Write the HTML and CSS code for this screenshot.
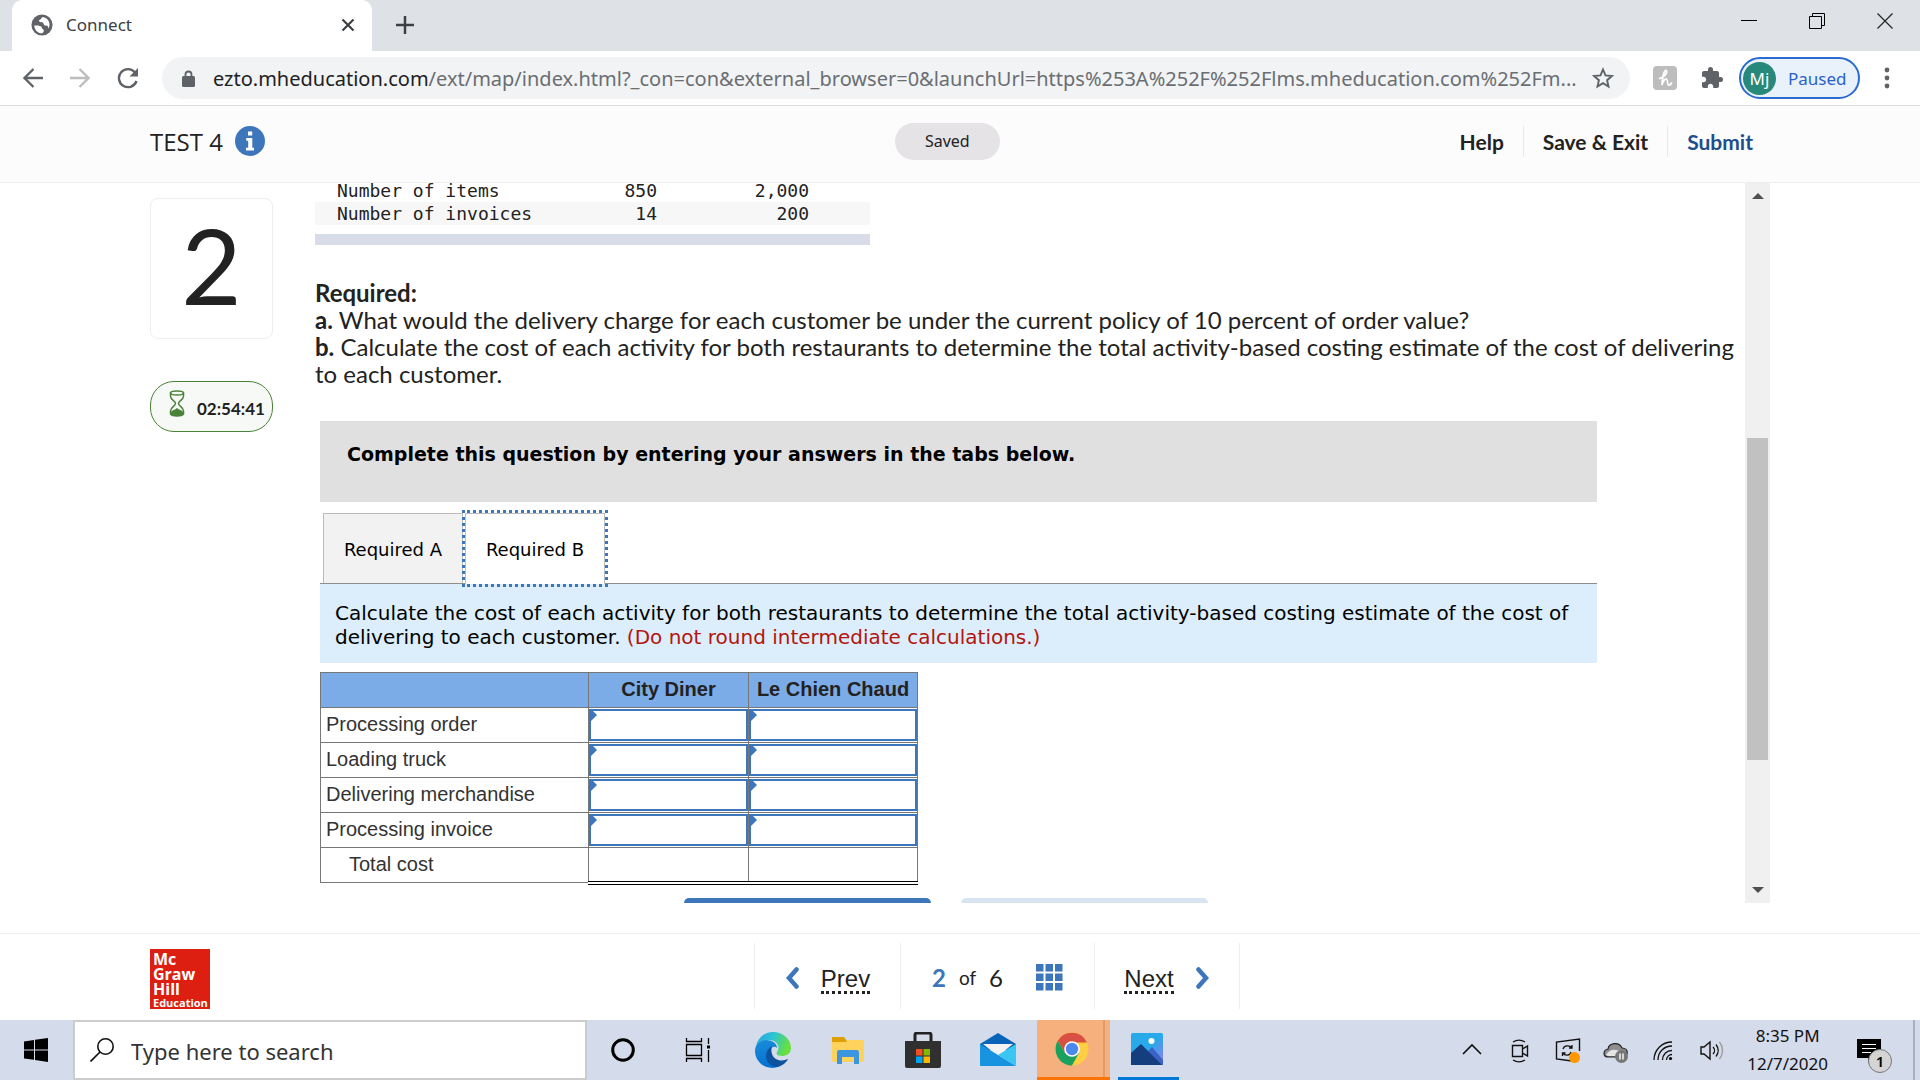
FILE: index.html
```html
<!DOCTYPE html>
<html lang="en">
<head>
<meta charset="utf-8">
<title>Connect</title>
<link rel="stylesheet" href="styles.css">
</head>
<body>
<div class="tabstrip">
  <div class="tab">
    <svg class="i22" viewBox="0 0 24 24"><circle cx="12" cy="12" r="11.500" fill="#5f6368"/><path d="M3.500 12.500c3 0 6 0 7.500 1s.5 2.500 2 3.200 1.500 2-.5 4.300C8 21.500 4 18 3.500 12.500zM13 3.200c-2 .3-1.500 2.300-3 2.800s-2 1.500-.5 2.500 3.500 0 4 1.500 1 2.500 3 2.500 2.500 1.500 2.300 3.500C22 12 20 4.500 13 3.200z" fill="#fff"/></svg>
    <span class="tab-title">Connect</span>
    <button class="icon-btn" aria-label="Close tab"><svg class="i14" viewBox="0 0 14 14"><path d="M1.500 1.500l11 11M12.500 1.500l-11 11" stroke="#3c4043" stroke-width="2.200"/></svg></button>
  </div>
  <button class="icon-btn new-tab" aria-label="New tab"><svg class="i18" viewBox="0 0 18 18"><path d="M9 0v18M0 9h18" stroke="#3c4043" stroke-width="2.500"/></svg></button>
  <div class="win-controls">
    <button class="icon-btn" aria-label="Minimize"><svg class="i16" viewBox="0 0 16 16"><path d="M0 7.500h16" stroke="#000"/></svg></button>
    <button class="icon-btn" aria-label="Restore"><svg class="i16" viewBox="0 0 16 16"><path d="M.5 3.500h12v12H.5zM3.500 3V.5h12v12H13" fill="none" stroke="#000"/></svg></button>
    <button class="icon-btn" aria-label="Close"><svg class="i16" viewBox="0 0 16 16"><path d="M.5.5l15 15M15.500.5l-15 15" stroke="#222" stroke-width="1.200"/></svg></button>
  </div>
</div>

<div class="toolbar">
  <button class="icon-btn" aria-label="Back"><svg class="i20" viewBox="0 0 20 20"><path d="M20 10H2M10.500 1l-9 9 9 9" fill="none" stroke="#5f6368" stroke-width="2.300"/></svg></button>
  <button class="icon-btn" aria-label="Forward"><svg class="i20" viewBox="0 0 20 20"><path d="M0 10h18M9.500 1l9 9-9 9" fill="none" stroke="#bdbdbd" stroke-width="2.300"/></svg></button>
  <button class="icon-btn" aria-label="Reload"><svg class="i22" viewBox="0 0 22 22"><path d="M18 5.500A9 9 0 1 0 19.500 14" fill="none" stroke="#5f6368" stroke-width="2.400"/><path d="M21 1v8.500h-8.500z" fill="#5f6368"/></svg></button>
  <div class="omnibox">
    <svg class="lock" viewBox="0 0 13 17"><path d="M3.500 7V4.500a3 3 0 0 1 6 0V7" fill="none" stroke="#5f6368" stroke-width="1.800"/><rect y="6" width="13" height="11" rx="1.500" fill="#5f6368"/></svg>
    <span class="url"><span class="host">ezto.mheducation.com</span>/ext/map/index.html?_con=con&amp;external_browser=0&amp;launchUrl=https%253A%252F%252Flms.mheducation.com%252Fm...</span>
    <button class="icon-btn" aria-label="Bookmark this tab"><svg class="i22" viewBox="0 0 22 22"><path d="M11 2.500l2.500 5.900 6.400.6-4.800 4.200 1.400 6.300-5.500-3.300-5.500 3.300 1.400-6.300L2.100 9l6.400-.6z" fill="none" stroke="#5f6368" stroke-width="1.900"/></svg></button>
  </div>
  <button class="icon-btn ext" aria-label="Honey"><svg class="i24" viewBox="0 0 24 24"><rect width="24" height="24" rx="4" fill="#bdbdbd"/><path d="M6.500 12.500c4-1 8-5 7-7.500s-4 2-4.500 14c1-4 3-6.500 4.500-6s.5 5.500 2 6 2.500-1 3-2" fill="none" stroke="#fff" stroke-width="1.800" stroke-linecap="round"/></svg></button>
  <button class="icon-btn ext" aria-label="Extensions"><svg class="i24" viewBox="0 0 24 24"><path d="M20.500 11H19V7c0-1.100-.9-2-2-2h-4V3.500a2.500 2.500 0 0 0-5 0V5H4c-1.100 0-2 .9-2 2v3.800h1.500c1.500 0 2.700 1.200 2.700 2.700S5 16.200 3.500 16.200H2V20c0 1.100.9 2 2 2h3.800v-1.500c0-1.500 1.200-2.700 2.700-2.700s2.700 1.200 2.700 2.700V22H17c1.100 0 2-.9 2-2v-4h1.500a2.500 2.500 0 0 0 0-5z" fill="#5f6368"/></svg></button>
  <button class="profile"><span class="avatar">Mj</span><span>Paused</span></button>
  <button class="icon-btn menu" aria-label="Menu"><svg class="dots" viewBox="0 0 6 22"><g fill="#5f6368"><circle cx="3" cy="3" r="2.400"/><circle cx="3" cy="11" r="2.400"/><circle cx="3" cy="19" r="2.400"/></g></svg></button>
</div>

<header class="header">
  <div class="test-name"><span>TEST 4</span><svg class="i30" viewBox="0 0 30 30"><circle cx="15" cy="15" r="15" fill="#3d76bb"/><path d="M13 5.500h4.200v4H13zM11.300 12h6v9.800H19v2.700h-8v-2.700h2.200v-7h-1.900z" fill="#fff"/></svg></div>
  <div class="saved">Saved</div>
  <nav class="actions"><a href="#">Help</a><a href="#">Save &amp; Exit</a><a href="#" class="submit">Submit</a></nav>
</header>

<main class="main">
  <aside class="side">
    <div class="qnum">2</div>
    <div class="timer"><svg class="hourglass" viewBox="0 0 16 27"><path d="M1.500 2.500v3.500c0 4 5 5 5 7.500s-5 3.500-5 7.500V24c2 2.600 11 2.600 13 0v-3c0-4-5-5-5-7.500s5-3.500 5-7.500V2.500" fill="none" stroke="#4a8239" stroke-width="1.500"/><ellipse cx="8" cy="3" rx="6.500" ry="2" fill="none" stroke="#4a8239" stroke-width="1.500"/><path d="M8 18c2 2 5 2 6 4v2.500c-2 2-10 2-12 0V22c1-2 4-2 6-4z" fill="#4a8239"/></svg><span>02:54:41</span></div>
  </aside>
  <section class="question">
    <div class="given">
      <table class="data">
        <tr><td>Number of items</td><td>850</td><td>2,000</td></tr>
        <tr><td>Number of invoices</td><td>14</td><td>200</td></tr>
      </table>
      <div class="rule"></div>
    </div>
    <div class="prompt">
      <b>Required:</b><br>
      <b>a.</b> What would the delivery charge for each customer be under the current policy of 10 percent of order value?<br>
      <b>b.</b> Calculate the cost of each activity for both restaurants to determine the total activity-based costing estimate of the cost of delivering to each customer.
    </div>
    <div class="work">
      <div class="instruction">Complete this question by entering your answers in the tabs below.</div>
      <div class="tabs"><button class="req">Required A</button><button class="req active">Required B</button></div>
      <div class="panel">Calculate the cost of each activity for both restaurants to determine the total activity-based costing estimate of the cost of delivering to each customer. <span class="warn">(Do not round intermediate calculations.)</span></div>
      <table class="answers">
        <thead><tr><th class="label-col"></th><th class="city-col">City Diner</th><th>Le Chien Chaud</th></tr></thead>
        <tbody>
          <tr><td>Processing order</td><td class="cell"><input aria-label="Processing order, City Diner"></td><td class="cell"><input aria-label="Processing order, Le Chien Chaud"></td></tr>
          <tr><td>Loading truck</td><td class="cell"><input aria-label="Loading truck, City Diner"></td><td class="cell"><input aria-label="Loading truck, Le Chien Chaud"></td></tr>
          <tr><td>Delivering merchandise</td><td class="cell"><input aria-label="Delivering merchandise, City Diner"></td><td class="cell"><input aria-label="Delivering merchandise, Le Chien Chaud"></td></tr>
          <tr><td>Processing invoice</td><td class="cell"><input aria-label="Processing invoice, City Diner"></td><td class="cell"><input aria-label="Processing invoice, Le Chien Chaud"></td></tr>
          <tr class="total"><td>Total cost</td><td class="sum"></td><td class="sum"></td></tr>
        </tbody>
      </table>
      <div class="pager"><button class="step" aria-label="Required A"></button><button class="step off" aria-label="Required B" disabled></button></div>
    </div>
  </section>
  <div class="scrollbar">
    <svg class="arrow" viewBox="0 0 12 6"><path d="M0 6l6-6 6 6z" fill="#505050"/></svg>
    <div class="thumb"></div>
    <svg class="arrow" viewBox="0 0 12 6"><path d="M0 0l6 6 6-6z" fill="#505050"/></svg>
  </div>
</main>

<footer class="footer">
  <div class="logo">Mc<br>Graw<br>Hill<br><span class="edu">Education</span></div>
  <nav class="pages">
    <div class="seg"><svg class="chev" viewBox="0 0 14 22"><path d="M11.500 2.500L4 11l7.500 8.500" fill="none" stroke="#3d76bb" stroke-width="4.500" stroke-linecap="round"/></svg><a href="#">Prev</a></div>
    <div class="seg mid"><b class="cur">2</b><span class="of">of</span><span>6</span><svg class="grid" viewBox="0 0 27 27"><path d="M0 0h7.500v7.500H0zM9.500 0H17v7.500H9.500zM19 0h7.500v7.500H19zM0 9.500h7.500V17H0zM9.500 9.500H17V17H9.500zM19 9.500h7.500V17H19zM0 19h7.500v7.500H0zM9.500 19H17v7.500H9.500zM19 19h7.500v7.500H19z" fill="#3d76bb"/></svg></div>
    <div class="seg"><a href="#">Next</a><svg class="chev" viewBox="0 0 14 22"><path d="M2.500 2.500L10 11l-7.500 8.500" fill="none" stroke="#3d76bb" stroke-width="4.500" stroke-linecap="round"/></svg></div>
  </nav>
</footer>

<div class="taskbar">
  <button class="icon-btn start" aria-label="Start"><svg class="i24" viewBox="0 0 24 24"><path d="M0 3.400l10-1.400v9.400H0zM11 1.800L24 0v11.400H11zM0 12.400h10v9.400L0 20.600zM11 12.400h13V24l-13-2z"/></svg></button>
  <label class="search"><svg class="i24" viewBox="0 0 24 24"><circle cx="15.500" cy="8.500" r="7.700" fill="none" stroke="#111" stroke-width="1.600"/><path d="M10 14L.5 23.500" stroke="#111" stroke-width="1.700"/></svg><input type="text" placeholder="Type here to search" aria-label="Search"></label>
  <div class="apps">
    <button class="app" aria-label="Cortana"><svg class="i26" viewBox="0 0 26 26"><circle cx="13" cy="13" r="10.300" fill="none" stroke="#000" stroke-width="3"/></svg></button>
    <button class="app" aria-label="Task View"><svg class="i26" viewBox="0 0 26 26"><path d="M1.500 1v3.500h15V1M1.500 7.500h15v11h-15zM1.500 25v-3.500h15V25M23.500 1v6M23.500 13v12" fill="none" stroke="#000" stroke-width="1.300"/><path d="M22 8.500h3v3h-3z"/></svg></button>
    <button class="app" aria-label="Edge"><svg class="i36" viewBox="0 0 36 36"><defs><linearGradient id="ea" x2="1" y2=".3"><stop stop-color="#2a9fe5"/><stop offset=".5" stop-color="#2cc3d5"/><stop offset="1" stop-color="#68e03f"/></linearGradient><linearGradient id="eb" x2=".3" y2="1"><stop stop-color="#1b8fd9"/><stop offset="1" stop-color="#0670d2"/></linearGradient></defs><path d="M1 14C3 5 10 0 18 0c10 0 18 7 18 16 0 6-5 8-9 8-5 0-6-2-5-4 4-6-1-12-8-12C8 8 3 10 1 14z" fill="url(#ea)"/><path d="M0 19c0-7 5-11 11-11 7 0 11 4 11 8-3-3-8 0-8 6 0 7 5 11 11 12-12 6-25-3-25-15z" fill="url(#eb)"/><path d="M17 14.500c-8 3-9 19 5 20.500 5-1 9-4 11-8-1.500 0-3 2-8 1.500-7-1-10-8-8-14z" fill="#0c529f"/></svg></button>
    <button class="app" aria-label="File Explorer"><svg class="i36" viewBox="0 0 36 36"><path d="M2 5h12l3 4v4H2z" fill="#dfa000"/><path d="M2 10h14l2-2h16v20a2 2 0 0 1-2 2H4a2 2 0 0 1-2-2z" fill="#fed25c"/><path d="M7 32V20a2 2 0 0 1 2-2h18a2 2 0 0 1 2 2v12h-5v-7H12v7z" fill="#3b96df"/></svg></button>
    <button class="app" aria-label="Store"><svg class="i36" viewBox="0 0 36 36"><path d="M10 11V3a2 2 0 0 1 2-2h12a2 2 0 0 1 2 2v8" fill="none" stroke="#222" stroke-width="3"/><path d="M0 9h36v25a2 2 0 0 1-2 2H2a2 2 0 0 1-2-2z" fill="#303030"/><path d="M11 17h6.500v6.500H11z" fill="#f25022"/><path d="M18.500 17H25v6.500h-6.500z" fill="#7fba00"/><path d="M11 24.500h6.500V31H11z" fill="#00a4ef"/><path d="M18.500 24.500H25V31h-6.500z" fill="#ffb900"/></svg></button>
    <button class="app" aria-label="Mail"><svg class="i36" viewBox="0 0 36 36"><path d="M0 12L18 1l18 11v6H0z" fill="#0864b8"/><path d="M3 12h30L18 24z" fill="#f3f3f3"/><path d="M0 12l36 22H1a1 1 0 0 1-1-1z" fill="#1793e0"/><path d="M36 12L18 23l18 11z" fill="#39c6f2"/></svg></button>
    <button class="app chrome" aria-label="Chrome"><svg class="i34" viewBox="0 0 34 34"><circle cx="17" cy="17" r="16.500" fill="#ffce42"/><path d="M2.700 8.800A16.500 16.500 0 0 1 32 10.500H17L10 21z" fill="#d94f43"/><path d="M2.700 8.800A16.500 16.500 0 0 0 17 33.500L24 21 10 21z" fill="#1aa05f"/><circle cx="17" cy="17" r="7.800" fill="#fff"/><circle cx="17" cy="17" r="6.200" fill="#4a88ee"/></svg></button>
    <button class="app photos" aria-label="Photos"><svg class="i32" viewBox="0 0 32 32"><defs><linearGradient id="ph" x2="1" y2="1"><stop offset=".5" stop-color="#28aaea"/><stop offset="1" stop-color="#9b7ae8"/></linearGradient></defs><rect width="32" height="32" rx="1.500" fill="url(#ph)"/><path d="M12 24l9-10 11 13v5H12z" fill="#3c62c7"/><path d="M0 20l10-9 21 21H0z" fill="#153e7e"/><circle cx="20.500" cy="8" r="3" fill="#fff"/></svg></button>
  </div>
  <div class="tray">
    <svg class="i26" viewBox="0 0 26 26"><path d="M4 17l9-9 9 9" fill="none" stroke="#111" stroke-width="1.600"/></svg>
    <svg class="i26" viewBox="0 0 26 26"><path d="M5.500 8.500h10v11h-10zM15.500 12l5-3v10l-5-3M6 5c4-2.500 8-2.500 12 0M6 23c4 2.500 8 2.500 12 0" fill="none" stroke="#111" stroke-width="1.400"/></svg>
    <svg class="i26" viewBox="0 0 26 26"><path d="M17 24L1.500 22V5L24.500 2v12" fill="none" stroke="#111" stroke-width="1.400"/><path d="M8 12c1-4 7-4 9-1m0-3v3h-3M16 15c-1 4-6 4-8.500 1m0 3v-3h3" fill="none" stroke="#111" stroke-width="1.300"/><circle cx="19.500" cy="20.500" r="5.500" fill="#ff9800"/></svg>
    <svg class="i26" viewBox="0 0 26 26"><path d="M6 20c-7 0-6-7-1-8 1-6 11-8 14-1 7 0 7 9 0 9z" fill="#8e8e8e" stroke="#222" stroke-width="1.200"/><path d="M3 18c3-5 8-7 15-3l-2 4H5z" fill="#e5e5e5"/><circle cx="18.500" cy="19.500" r="6.500" fill="#777"/><path d="M17 16.500v6M20 16.500v6" stroke="#fff" stroke-width="1.400"/></svg>
    <svg class="i26" viewBox="0 0 26 26"><g fill="none" stroke="#111" stroke-width="1.300"><path d="M3 23C3 13 11 5 21 5M7 23C7 15 13 9 21 9M11.500 23c0-5.500 4-9.500 9.500-9.500M15.500 23c0-3 2.500-5.500 5.500-5.500"/></g><circle cx="19.500" cy="21.500" r="1.600"/></svg>
    <svg class="i26" viewBox="0 0 26 26"><path d="M2 10h3l6-5v17l-6-5H2z" fill="none" stroke="#111" stroke-width="1.400"/><path d="M14 10c2 2 2 5 0 7M17 7.500c3 4 3 8 0 12" fill="none" stroke="#111" stroke-width="1.300"/><path d="M20.500 5c4 5 4 12 0 17" fill="none" stroke="#999" stroke-width="1.300"/></svg>
    <div class="clock"><span>8:35 PM</span><span>12/7/2020</span></div>
    <div class="notif"><svg class="i26" viewBox="0 0 26 26"><path d="M1 2h24v19h-8l-5 5v-5H1z"/><path d="M6 7.500h14M6 11.500h14M6 15.500h9" stroke="#fff" stroke-width="1.200"/></svg><span class="badge">1</span></div>
    <div class="desktop"></div>
  </div>
</div>
</body>
</html>
```
FILE: styles.css
```css
* { box-sizing: border-box; }
body { margin: 0; height: 100vh; display: flex; flex-direction: column; background: #fff; color: #222; font-family: Lato, sans-serif; }
svg { display: block; flex: none; }
button { font: inherit; color: inherit; margin: 0; }
input { font: inherit; }
.icon-btn { border: 0; background: none; padding: 0; display: flex; align-items: center; justify-content: center; }
.i14 { width: 14px; height: 14px; }
.i16 { width: 16px; height: 16px; }
.i18 { width: 18px; height: 18px; }
.i20 { width: 20px; height: 20px; }
.i22 { width: 22px; height: 22px; }
.i24 { width: 24px; height: 24px; }
.i26 { width: 26px; height: 26px; }
.i30 { width: 30px; height: 30px; }
.i32 { width: 32px; height: 32px; }
.i34 { width: 34px; height: 34px; }
.i36 { width: 36px; height: 36px; }

/* Browser chrome */
.tabstrip, .toolbar, .header, .footer, .taskbar { flex: none; }
.tabstrip { height: 51px; background: #dee1e6; display: flex; align-items: center; padding-left: 12px; font-family: "Noto Sans", sans-serif; }
.tab { width: 360px; height: 51px; background: #fff; border-radius: 10px 10px 0 0; display: flex; align-items: center; padding: 0 17px 2px 19px; gap: 13px; }
.tab-title { flex: 1; font-size: 17px; color: #3c4043; }
.new-tab { margin: 0 0 2px 24px; }
.win-controls { margin-left: auto; display: flex; gap: 52px; padding: 0 27px 9px 0; }
.toolbar { height: 55px; border-bottom: 1px solid #dadce0; display: flex; align-items: center; padding: 0 30px 0 23px; gap: 27px; font-family: "Noto Sans", sans-serif; }
.omnibox { flex: 1; min-width: 0; height: 42px; margin-left: -4px; border-radius: 21px; background: #f1f3f4; display: flex; align-items: center; padding: 0 16px 0 20px; gap: 18px; }
.lock { width: 13px; height: 17px; }
.url { flex: 1; min-width: 0; margin-right: -10px; white-space: nowrap; overflow: hidden; font-size: 20px; color: #6a6e73; }
.host { color: #202124; }
.ext { margin-left: -4px; }
.profile { height: 42px; width: 121px; margin-left: -12px; border: 2px solid #2a6bd0; border-radius: 21px; background: #e9f1fb; padding: 0 2px; display: flex; align-items: center; gap: 12px; font-size: 17px; color: #2a5fcb; }
.avatar { width: 33px; height: 33px; border-radius: 50%; background: #28897a; color: #fff; display: flex; align-items: center; justify-content: center; }
.dots { width: 6px; height: 22px; }
.menu { margin-left: -3px; }

/* Assignment header */
.header { height: 77px; background: #fcfcfc; border-bottom: 1px solid #eee; display: grid; grid-template-columns: 491fr auto 509fr; align-items: center; padding: 0 148px 6px 150px; }
.test-name { display: flex; align-items: center; gap: 12px; font-family: "Open Sans", sans-serif; font-size: 24px; }
.saved { width: 105px; height: 37px; border-radius: 19px; background: #e5e3e6; text-align: center; line-height: 36px; font-family: "Noto Sans", sans-serif; font-size: 16px; }
.actions { display: flex; justify-content: flex-end; }
.actions a { padding: 0 19px; line-height: 31px; border-left: 1px solid #e8e8e8; font-size: 21px; font-weight: 700; color: #222; text-decoration: none; }
.actions a:first-child { border-left: 0; }
.actions .submit { color: #1f4e8c; }

/* Question area */
.main { flex: 1; min-height: 0; display: flex; margin-right: 150px; overflow: hidden; }
.side { width: 123px; margin: 15px 42px 0 150px; flex: none; }
.qnum { height: 141px; border: 1px solid #eee; border-radius: 8px; display: flex; align-items: center; justify-content: center; padding-bottom: 8px; font-size: 104px; line-height: 104px; }
.timer { height: 51px; margin-top: 42px; border: 1px solid #4a8239; border-radius: 24px; background: #f7f9f6; display: flex; align-items: center; gap: 12px; padding-left: 18px; font-size: 17px; font-weight: 700; }
.timer span { padding-top: 4px; }
.hourglass { width: 16px; height: 27px; margin-bottom: 6px; }
.question { flex: 1; min-width: 0; }
.given { width: 555px; margin-top: -4px; }
.data { width: 100%; border-collapse: collapse; font-family: "DejaVu Sans Mono", monospace; font-size: 18px; line-height: 23px; }
.data td { padding: 0; text-align: right; }
.data td:first-child { text-align: left; padding-left: 22px; }
.data td:nth-child(2) { width: 122px; }
.data td:nth-child(3) { width: 213px; padding-right: 61px; }
.data tr:last-child { background: #f7f7f7; }
.rule { height: 11px; margin-top: 9px; background: #d8dce8; }
.prompt { margin-top: 34px; padding-right: 8px; font-size: 24px; line-height: 27px; }
.work { margin: 34px 148px 0 5px; font-family: "DejaVu Sans", sans-serif; color: #000; }
.instruction { height: 81px; background: #e0e0e0; padding: 21px 27px; font-size: 19px; line-height: 24px; font-weight: 700; }
.tabs { display: flex; align-items: flex-end; height: 82px; border-bottom: 1px solid #8d8d8d; padding-left: 3px; }
.req { width: 140px; height: 70px; border: 1px solid #bbb; border-bottom: 0; background: #f2f2f2; font-size: 18px; padding: 2px 0 0; }
.req.active { margin: 0 0 -1px 2px; padding-top: 0; height: 71px; background: #fff; outline: 3px dotted #3d76bb; }
.panel { background: #dcedfb; padding: 17px 15px 14px; font-size: 20px; line-height: 24px; }
.warn { color: #b3150b; }
.answers { margin-top: 9px; width: 598px; table-layout: fixed; border-collapse: collapse; font-family: "Liberation Sans", sans-serif; font-size: 20px; color: #333; }
.answers th, .answers td { height: 35px; border: 1px solid #777; padding: 0 5px 2px; line-height: 24px; text-align: left; }
.answers th { background: #7cace7; color: #222; text-align: center; }
.label-col { width: 268px; }
.city-col { width: 160px; }
.answers .cell { padding: 0; position: relative; }
.cell input { display: block; width: 100%; height: 32px; border: 2px solid #3d76bb; background: #fff; padding: 0 8px; border-radius: 0; }
.cell::after { content: ""; position: absolute; left: 2px; top: 1px; border: solid transparent; border-width: 6px 0 6px 6px; border-left-color: #3d76bb; }
.answers .total td:first-child { padding-left: 28px; }
.answers .sum { border-top: 1px solid #000; border-bottom: 4px double #000; }
.pager { display: flex; gap: 30px; margin: 13px 0 0 364px; }
.step { width: 247px; height: 60px; border: 0; border-radius: 5px; background: #3d76bb; }
.step.off { background: #d8e4f1; }
.scrollbar { width: 25px; flex: none; background: #f0f0f0; display: flex; flex-direction: column; align-items: center; padding: 10px 0; }
.arrow { width: 12px; height: 6px; }
.thumb { width: 21px; flex: 0 0 46%; margin: 239px 0 auto; background: #c1c1c1; }

/* Assignment footer */
.footer { height: 87px; margin-top: 30px; border-top: 1px solid #eee; display: grid; grid-template-columns: 1fr auto 1fr; align-items: center; padding: 0 76px 0 150px; }
.logo { width: 60px; height: 60px; margin-top: 4px; background: #dc1f10; color: #fff; padding: 3px 3px 0; font-family: "Open Sans", sans-serif; font-weight: 700; font-size: 16px; line-height: 15px; }
.edu { display: block; font-size: 11px; line-height: 11px; }
.pages { display: flex; font-family: "Liberation Sans", sans-serif; font-size: 24px; }
.seg { width: 146px; height: 66px; margin-bottom: 3px; padding-top: 4px; border-left: 1px solid #eee; display: flex; align-items: center; justify-content: center; gap: 22px; }
.seg:last-child { border-right: 1px solid #eee; }
.seg a { margin-top: 6px; color: #222; text-decoration: none; border-bottom: 3px dotted #222; line-height: 24px; }
.mid { width: 194px; gap: 13px; font-family: Lato, sans-serif; }
.cur { color: #3d76bb; }
.of { font-size: 19px; }
.chev { width: 14px; height: 22px; }
.grid { width: 27px; height: 27px; margin-left: 20px; }

/* Taskbar */
.taskbar { height: 60px; background: #d4dbea; display: flex; font-family: "Noto Sans", sans-serif; }
.start { width: 73px; padding-right: 2px; }
.search { width: 514px; border: 2px solid #ccc; background: #fff; display: flex; align-items: center; gap: 17px; padding-left: 15px; }
.search input { flex: 1; border: 0; padding: 2px 0 0; font-size: 22px; background: none; }
.search input::placeholder { color: #333; opacity: 1; }
.apps { display: flex; }
.app { border: 0; padding: 0 4px 0 0; width: 75px; background: none; display: flex; align-items: center; justify-content: center; }
.chrome { width: 73px; background: linear-gradient(90deg, #f5b07d 66px, #e09b6c 66px, #e09b6c 68px, #f5b07d 68px); border-bottom: 3px solid #ff7300; padding-right: 3px; }
.photos { width: 61px; margin-left: 8px; border-bottom: 3px solid #0078d7; }
.tray { margin-left: auto; display: flex; align-items: center; gap: 22px; }
.clock { display: flex; flex-direction: column; align-items: center; font-size: 17px; line-height: 28px; color: #111; }
.notif { position: relative; margin-left: 6px; }
.badge { position: absolute; left: 12px; top: 12px; width: 24px; height: 24px; border: 1px solid #777; border-radius: 50%; background: #d4d4d4; color: #000; font-size: 15px; line-height: 22px; font-weight: 600; text-align: center; }
.desktop { width: 7px; height: 60px; margin-left: 9px; border-left: 2px solid #aab0bb; }
```
